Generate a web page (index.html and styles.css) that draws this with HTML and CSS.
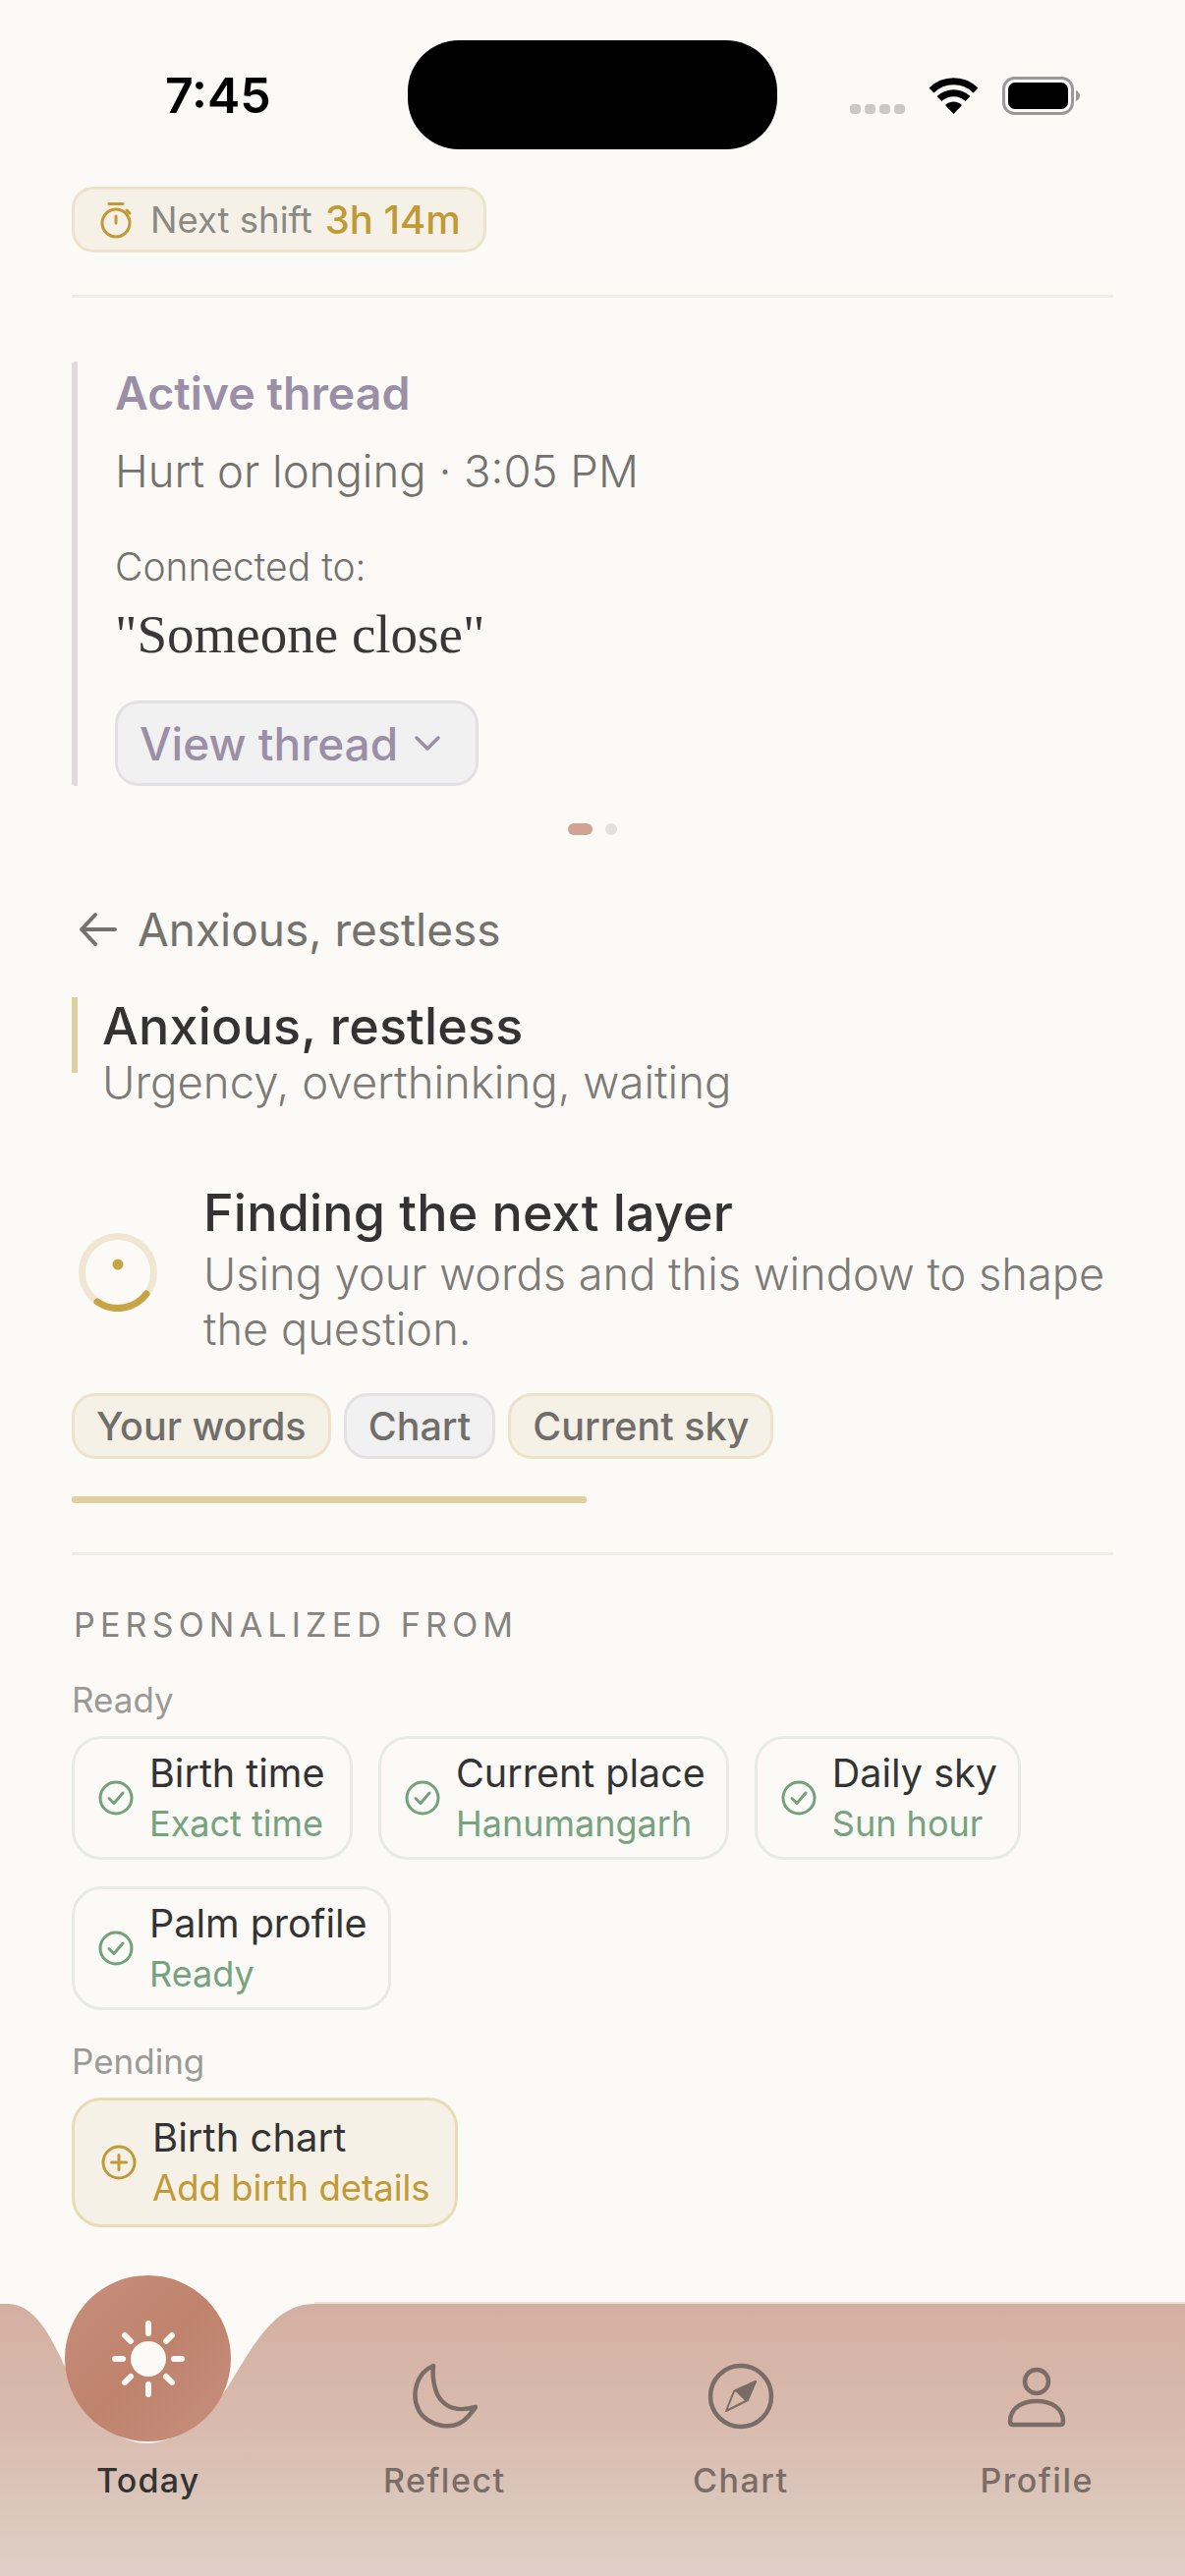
FILE: index.html
```html
<!DOCTYPE html>
<html lang="en">
<head>
    <meta charset="UTF-8">
    <meta name="viewport" content="width=device-width, initial-scale=1.0">
    <title>Today</title>
    <link rel="stylesheet" href="styles.css">
</head>
<body>
    <div class="screen">
        <header class="status-bar">
            <div class="status-time">7:45</div>
            <div class="island"></div>
            <div class="status-icons">
                <div class="signal"><i></i><i></i><i></i><i></i></div>
                <svg class="wifi" width="51" height="38" viewBox="0 0 51 38">
                    <path d="M3 14A32 32 0 0 1 48 14" fill="none" stroke="#000" stroke-width="7"/>
                    <path d="M11 22.500A21 21 0 0 1 40 22.500" fill="none" stroke="#000" stroke-width="7"/>
                    <path d="M25.500 38L17 29A12 12 0 0 1 34 29Z" fill="#000"/>
                </svg>
                <svg class="battery" width="80" height="39" viewBox="0 0 80 39">
                    <rect x="1.500" y="1.500" width="70" height="36" rx="11" fill="none" stroke="#999" stroke-width="3"/>
                    <rect x="6" y="6" width="61" height="27" rx="7" fill="#000"/>
                    <path d="M75 14Q79 16 79 19.500Q79 23 75 25Z" fill="#999"/>
                </svg>
            </div>
        </header>

        <main class="content">
            <div class="shift-pill">
                <svg width="34" height="38" viewBox="0 0 34 38" fill="none" stroke="#c19a35" stroke-width="3" stroke-linecap="round">
                    <circle cx="16" cy="22" r="14"/>
                    <path d="M9 2.500H23M16 15V22M27 9L30 12"/>
                </svg>
                <span class="shift-label">Next shift</span>
                <span class="shift-time">3h 14m</span>
            </div>
            <div class="divider divider-top"></div>

            <section class="thread">
                <div class="thread-title">Active thread</div>
                <div class="thread-meta">Hurt or longing · 3:05 PM</div>
                <div class="thread-label">Connected to:</div>
                <div class="thread-quote">"Someone close"</div>
                <div class="thread-btn">
                    <span>View thread</span>
                    <svg width="26" height="16" viewBox="0 0 26 16" fill="none" stroke="#9b8fa8" stroke-width="3.500" stroke-linecap="round" stroke-linejoin="round">
                        <path d="M2 2L13 13L24 2"/>
                    </svg>
                </div>
            </section>

            <div class="pager"><i class="on"></i><i></i></div>

            <div class="back-row">
                <svg width="40" height="36" viewBox="0 0 40 36" fill="none" stroke="#73726e" stroke-width="4" stroke-linecap="round" stroke-linejoin="round">
                    <path d="M37 18H3M17 3L3 18L17 33"/>
                </svg>
                <span>Anxious, restless</span>
            </div>

            <div class="feeling">
                <div class="feeling-title">Anxious, restless</div>
                <div class="feeling-sub">Urgency, overthinking, waiting</div>
            </div>

            <div class="finding">
                <svg class="spinner" width="80" height="80" viewBox="0 0 80 80" fill="none">
                    <circle cx="40" cy="40" r="36.500" stroke="#efe7d2" stroke-width="7"/>
                    <path d="M69 62A36.500 36.500 0 0 1 19 70" stroke="#c7a444" stroke-width="7" stroke-linecap="round"/>
                    <circle cx="40" cy="32" r="5.500" fill="#c7a444"/>
                </svg>
                <div>
                    <div class="finding-title">Finding the next layer</div>
                    <div class="finding-sub">Using your words and this window to shape the question.</div>
                </div>
            </div>

            <div class="chips">
                <span class="chip">Your words</span>
                <span class="chip chip-grey">Chart</span>
                <span class="chip">Current sky</span>
            </div>
            <div class="progress"></div>
            <div class="divider divider-mid"></div>

            <div class="section-label">PERSONALIZED FROM</div>
            <div class="group-label">Ready</div>
            <div class="cards">
                <div class="card card-birth">
                    <svg class="check" width="36" height="36" viewBox="0 0 36 36" fill="none" stroke="#72a17a" stroke-width="3" stroke-linecap="round" stroke-linejoin="round"><circle cx="18" cy="18" r="16"/><path d="M11 18.500L16 23.500L25 13"/></svg>
                    <div><div class="card-name">Birth time</div><div class="card-sub">Exact time</div></div>
                </div>
                <div class="card">
                    <svg class="check" width="36" height="36" viewBox="0 0 36 36" fill="none" stroke="#72a17a" stroke-width="3" stroke-linecap="round" stroke-linejoin="round"><circle cx="18" cy="18" r="16"/><path d="M11 18.500L16 23.500L25 13"/></svg>
                    <div><div class="card-name">Current place</div><div class="card-sub">Hanumangarh</div></div>
                </div>
                <div class="card">
                    <svg class="check" width="36" height="36" viewBox="0 0 36 36" fill="none" stroke="#72a17a" stroke-width="3" stroke-linecap="round" stroke-linejoin="round"><circle cx="18" cy="18" r="16"/><path d="M11 18.500L16 23.500L25 13"/></svg>
                    <div><div class="card-name">Daily sky</div><div class="card-sub">Sun hour</div></div>
                </div>
                <div class="card">
                    <svg class="check" width="36" height="36" viewBox="0 0 36 36" fill="none" stroke="#72a17a" stroke-width="3" stroke-linecap="round" stroke-linejoin="round"><circle cx="18" cy="18" r="16"/><path d="M11 18.500L16 23.500L25 13"/></svg>
                    <div><div class="card-name">Palm profile</div><div class="card-sub">Ready</div></div>
                </div>
            </div>
            <div class="group-label group-pending">Pending</div>
            <div class="cards">
                <div class="card card-pending">
                    <svg class="check" width="36" height="36" viewBox="0 0 36 36" fill="none" stroke="#c19a35" stroke-width="3" stroke-linecap="round"><circle cx="18" cy="18" r="16"/><path d="M18 10.500V25.500M10.500 18H25.500"/></svg>
                    <div><div class="card-name">Birth chart</div><div class="card-sub">Add birth details</div></div>
                </div>
            </div>
        </main>

        <nav class="tabbar">
            <svg class="tabbar-bg" width="1206" height="279" viewBox="0 0 1206 279">
                <defs>
                    <linearGradient id="navFill" x1="0" y1="0" x2="0" y2="1">
                        <stop offset="0" stop-color="#d4afa1"/>
                        <stop offset="0.5" stop-color="#d9bdb0"/>
                        <stop offset="1" stop-color="#dfcfc6"/>
                    </linearGradient>
                </defs>
                <path d="M0 2H8C50 2 66 80 92 112C112 132 128 144 150 144C176 144 205 122 231 88C262 36 282 2 320 2H1206V279H0Z" fill="url(#navFill)"/>
                <path d="M320 1H1206" stroke="#efdcd5" stroke-width="2"/>
            </svg>
            <div class="tab tab-active">
                <div class="sun-btn">
                    <svg width="74" height="78" viewBox="0 0 74 78" fill="none" stroke="#fbfaf6" stroke-width="6" stroke-linecap="round">
                        <circle cx="37" cy="39" r="18" fill="#fbfaf6" stroke="none"/>
                        <path d="M37 3V13M37 65V75M3 39H11M63 39H71M13 15L19 21M61 15L55 21M13 63L19 57M61 63L55 57"/>
                    </svg>
                </div>
                <div class="tab-label">Today</div>
            </div>
            <div class="tab">
                <svg width="68" height="68" viewBox="0 0 68 68" fill="none" stroke="#7a6c66" stroke-width="4.500" stroke-linejoin="round">
                    <path d="M23 3C6 10 0 32 8 48C16 64 44 72 59 54C63 49 66 46 66 45C48 50 34 46 27 32C23 22 22 12 23 3Z"/>
                </svg>
                <div class="tab-label">Reflect</div>
            </div>
            <div class="tab">
                <svg width="68" height="68" viewBox="0 0 68 68" fill="none" stroke="#7a6c66" stroke-width="4.500" stroke-linejoin="round">
                    <circle cx="34" cy="34" r="31"/>
                    <path d="M49 19L27 29L19 49L41 38Z" stroke-width="2"/>
                    <path d="M49 19L29 28L39 38Z" fill="#7a6c66" stroke-width="2"/>
                </svg>
                <div class="tab-label">Chart</div>
            </div>
            <div class="tab">
                <svg width="68" height="68" viewBox="0 0 68 68" fill="none" stroke="#7a6c66" stroke-width="4.500" stroke-linejoin="round">
                    <circle cx="34" cy="19" r="12"/>
                    <path d="M7 60C7 46 19 39 34 39C49 39 61 46 61 60C61 62 60 63 58 63H10C8 63 7 62 7 60Z"/>
                </svg>
                <div class="tab-label">Profile</div>
            </div>
        </nav>
    </div>
</body>
</html>
```

FILE: styles.css
```css
* {
    box-sizing: border-box;
}
body {
    margin: 0;
    background-color: #FBFAF6;
    color: #333333;
    font-family: 'Inter', sans-serif;
}
.screen {
    width: 1206px;
    height: 2622px;
    display: flex;
    flex-direction: column;
    overflow: hidden;
}

/* status bar */
.status-bar {
    display: grid;
    grid-template-columns: 415px 376px 1fr;
    height: 190px;
    padding-top: 41px;
}
.status-time {
    padding: 25px 0 0 168px;
    font-size: 50px;
    line-height: 62px;
    font-weight: 600;
    color: #000000;
}
.island {
    height: 111px;
    background-color: #000000;
    border-radius: 52px;
}
.status-icons {
    display: flex;
    align-items: flex-start;
    padding: 37px 0 0 74px;
}
.signal {
    display: flex;
    gap: 4px;
    margin: 28px 24px 0 0;
}
.signal i {
    width: 11px;
    height: 10px;
    border-radius: 4px;
    background-color: #c9c9c7;
}
.wifi {
    margin-right: 24px;
}

/* main */
.content {
    flex: 1;
    padding: 0 73px;
}
.divider {
    height: 3px;
    background-color: #EFECE6;
}
.divider-top {
    margin-top: 43px;
}
.shift-pill {
    display: inline-flex;
    align-items: center;
    height: 67px;
    padding: 0 23px 0 26px;
    background-color: #F5F1E7;
    border: 3px solid #ECE3CA;
    border-radius: 22px;
}
.shift-label {
    margin-left: 17px;
    font-size: 36.500px;
    color: #8a8984;
}
.shift-time {
    margin-left: 13px;
    font-size: 40px;
    font-weight: 550;
    color: #C19A35;
}

/* active thread */
.thread {
    margin-top: 65px;
    padding-left: 38px;
    border-left: 6px solid #DEDAE0;
    border-radius: 3px;
}
.thread-title {
    font-size: 46.500px;
    line-height: 64px;
    font-weight: 600;
    color: #9B8FA8;
}
.thread-meta {
    margin-top: 16px;
    font-size: 45.500px;
    line-height: 64px;
    font-weight: 300;
    color: #73726E;
}
.thread-label {
    margin-top: 41px;
    font-size: 39px;
    line-height: 48px;
    font-weight: 300;
    color: #73726E;
}
.thread-quote {
    margin-top: 10px;
    font-family: 'Liberation Serif', serif;
    font-size: 55px;
    line-height: 70px;
    color: #383838;
}
.thread-btn {
    display: inline-flex;
    align-items: center;
    gap: 17px;
    height: 87px;
    margin-top: 32px;
    padding: 0 36px 0 22px;
    background-color: #F2F1F1;
    border: 3px solid #E3E0E5;
    border-radius: 24px;
    font-size: 46px;
    font-weight: 500;
    color: #9B8FA8;
    vertical-align: top;
}
.pager {
    display: flex;
    justify-content: center;
    gap: 13px;
    margin-top: 38px;
}
.pager i {
    width: 12px;
    height: 12px;
    border-radius: 6px;
    background-color: #E3E1DE;
}
.pager i.on {
    width: 25px;
    background-color: #D0A392;
}

/* feeling */
.back-row {
    display: flex;
    align-items: center;
    gap: 20px;
    height: 60px;
    margin-top: 66px;
    padding-left: 7px;
    font-size: 46px;
    color: #73726E;
}
.feeling {
    margin-top: 39px;
    padding-left: 31px;
    background: linear-gradient(#E0CF9C, #E0CF9C) no-repeat 0 0 / 6px 77px;
}
.feeling-title {
    font-size: 52px;
    line-height: 60px;
    font-weight: 550;
    letter-spacing: 0.200px;
}
.feeling-sub {
    font-size: 45.500px;
    line-height: 54px;
    font-weight: 300;
    color: #7C7B77;
}
.finding {
    display: flex;
    align-items: center;
    gap: 47px;
    margin-top: 75px;
    padding-left: 7px;
}
.spinner {
    flex: none;
    margin-top: 4px;
}
.finding-title {
    font-size: 52px;
    line-height: 62px;
    font-weight: 550;
    letter-spacing: 0.200px;
}
.finding-sub {
    margin-top: 3px;
    font-size: 45.200px;
    line-height: 56px;
    font-weight: 300;
    color: #7C7B77;
}
.chips {
    display: flex;
    gap: 13px;
    margin-top: 37px;
}
.chip {
    display: flex;
    align-items: center;
    height: 67px;
    padding: 0 22px;
    background-color: #F5F1E7;
    border: 3px solid #ECE3CA;
    border-radius: 24px;
    font-size: 39.500px;
    font-weight: 500;
    color: #6F6E6A;
}
.chip-grey {
    background-color: #F2F1F1;
    border-color: #E3E1E4;
}
.progress {
    width: 524px;
    height: 7px;
    margin-top: 38px;
    border-radius: 3px;
    background-color: #E0CF9F;
}
.divider-mid {
    margin-top: 50px;
}

/* personalized */
.section-label {
    margin-top: 52px;
    padding-left: 2px;
    font-size: 34px;
    line-height: 38px;
    letter-spacing: 5.200px;
    color: #85847F;
}
.group-label {
    margin-top: 35px;
    font-size: 35px;
    line-height: 44px;
    color: #9A9A97;
}
.group-pending {
    margin-top: 30px;
}
.cards {
    display: flex;
    flex-wrap: wrap;
    gap: 27px 26px;
    margin-top: 15px;
}
.card {
    display: flex;
    align-items: center;
    gap: 16px;
    height: 126px;
    padding: 0 21px 0 24px;
    background-color: #FBFAF6;
    border: 3px solid #E7EBE5;
    border-radius: 30px;
}
.card-birth {
    width: 286px;
}
.card-name {
    font-size: 39.500px;
    line-height: 48px;
}
.card-sub {
    margin-top: 4px;
    font-size: 36px;
    line-height: 46px;
    color: #76A37E;
}
.card-pending {
    height: 132px;
    background-color: #F5F1E7;
    border-color: #E8DCB5;
    padding: 0 25px 0 27px;
}
.card-pending .card-name {
    font-size: 40px;
}
.card-pending .card-sub {
    font-size: 36.500px;
    color: #C19A35;
}

/* tab bar */
.tabbar {
    position: relative;
    display: grid;
    grid-template-columns: repeat(4, 1fr);
    height: 279px;
}
.tabbar-bg {
    position: absolute;
    left: 0;
    top: 0;
}
.tab {
    position: relative;
    display: flex;
    flex-direction: column;
    align-items: center;
    padding-top: 62px;
}
.tab-label {
    position: absolute;
    top: 160px;
    font-size: 34px;
    line-height: 44px;
    font-weight: 500;
    letter-spacing: 1.500px;
    color: #7A6C66;
}
.tab-active .tab-label {
    letter-spacing: 1.200px;
    color: #333333;
}
.sun-btn {
    position: absolute;
    top: -27px;
    display: flex;
    align-items: center;
    justify-content: center;
    width: 169px;
    height: 169px;
    border-radius: 50%;
    background: linear-gradient(135deg, #C88F7B, #BF836D 50%, #C68F7B);
}
```
